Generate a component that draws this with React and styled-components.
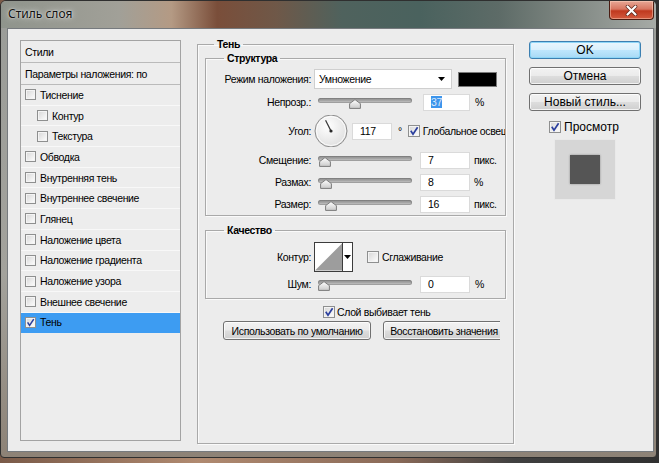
import styled, { createGlobalStyle } from "styled-components";

const GlobalStyle = createGlobalStyle`
  html, body {
    margin: 0;
    padding: 0;
  }
  body {
    width: 659px;
    height: 463px;
    overflow: hidden;
    background: linear-gradient(90deg, #7a5a48 0%, #b08a70 30%, #8a6a58 60%, #404040 78%, #303030 100%);
    font-family: "Liberation Sans", Arial, sans-serif;
    font-size: 10.5px;
    letter-spacing: -0.35px;
    color: #000;
  }
`;

const Window = styled.div`
  width: 657px;
  height: 458px;
  box-sizing: border-box;
  border: 1px solid #2f2f2f;
  border-radius: 6px 6px 4px 4px;
  background: linear-gradient(180deg, #9a9c98 0%, #a3a29c 60%, #8d8276 100%);
  display: flex;
  flex-direction: column;
  overflow: hidden;
`;

const TitleBar = styled.div`
  height: 27px;
  flex: none;
  display: flex;
  justify-content: space-between;
  align-items: flex-start;
  background: linear-gradient(
    90deg,
    #8f948c 0%,
    #a1a098 18%,
    #b49a84 26%,
    #7a4e3a 33%,
    #6f5848 42%,
    #4f625d 52%,
    #4a625e 64%,
    #5d6b67 76%,
    #7d8580 86%,
    #a6aaa6 100%
  );
`;

const Title = styled.div`
  margin: 5px 0 0 7px;
  font-family: "Noto Sans", "Open Sans", sans-serif;
  font-size: 12px;
  letter-spacing: 0;
  line-height: 16px;
  color: #111;
  text-shadow: 0 0 6px rgba(255, 255, 255, 0.85), 0 0 2px rgba(255, 255, 255, 0.8);
`;

const CloseButton = styled.div`
  width: 45px;
  height: 19px;
  margin-right: 2px;
  box-sizing: border-box;
  border: 1px solid #4a1c12;
  border-top: none;
  border-radius: 0 0 4px 4px;
  background: linear-gradient(180deg, #e7a795 0%, #d77661 45%, #c0391f 55%, #d35a3e 100%);
  box-shadow: inset 0 0 0 1px rgba(255, 220, 200, 0.45);
  display: flex;
  align-items: center;
  justify-content: center;
`;

const Client = styled.div`
  flex: none;
  height: 424px;
  margin: 0 2px 5px 6px;
  box-sizing: border-box;
  border: 1px solid #767a7e;
  background: #ececec;
  display: flex;
  align-items: flex-start;
  padding: 9px 0 0 12px;
`;

/* ---------- left list ---------- */

const StyleList = styled.div`
  width: 161px;
  height: 401px;
  margin-top: 2px;
  box-sizing: border-box;
  border: 1px solid #a3a3a3;
  background: #ededed;
  display: flex;
  flex-direction: column;
`;

const ListHeader = styled.div`
  height: 22px;
  box-sizing: border-box;
  border-bottom: 1px solid #bababa;
  padding-left: 4px;
  display: flex;
  align-items: center;
  white-space: nowrap;
  overflow: hidden;
`;

const Clipped = styled.span`
  display: inline-block;
  max-width: ${(p) => p.$max}px;
  overflow: hidden;
  white-space: nowrap;
`;

const ListItem = styled.div`
  height: 20.7px;
  box-sizing: border-box;
  border-bottom: 1px solid ${(p) => (p.$selected ? "#3d9cf2" : "#f8f8f8")};
  background: ${(p) => (p.$selected ? "#3d9cf2" : "transparent")};
  padding-left: ${(p) => (p.$indent ? 16 : 4)}px;
  display: flex;
  align-items: center;
  gap: 4px;
  white-space: nowrap;
`;

/* ---------- check box ---------- */

const Box = styled.span`
  flex: none;
  display: inline-flex;
  align-items: center;
  justify-content: center;
  width: ${(p) => p.$size}px;
  height: ${(p) => p.$size}px;
  box-sizing: border-box;
  border: 1px solid #8e8f8f;
  background: linear-gradient(135deg, #d6d6d6 0%, #f2f2f2 70%, #ffffff 100%);
  box-shadow: inset 0 0 0 1px #f4f4f4;
`;

function CheckBox({ checked, size = 11 }) {
  return (
    <Box $size={size}>
      {checked && (
        <svg width={size - 2} height={size - 2} viewBox="0 0 10 10">
          <path d="M1.8 4.8 L4 8.2 L8.6 1.2" fill="none" stroke="#2b3f9e" strokeWidth="1.7" />
        </svg>
      )}
    </Box>
  );
}

/* ---------- middle groups ---------- */

const Middle = styled.div`
  width: 317px;
  margin-left: 16px;
  flex: none;
`;

const Group = styled.fieldset`
  margin: ${(p) => p.$top || 0}px 0 0 0;
  min-width: 0;
  box-sizing: border-box;
  height: ${(p) => (p.$height ? `${p.$height}px` : "auto")};
  border: 1px solid #a9a9a9;
  box-shadow: 1px 1px 0 #fafafa, inset 1px 1px 0 #fafafa;
  padding: ${(p) => p.$pad};
  display: flex;
  flex-direction: column;
  gap: ${(p) => p.$gap || 0}px;
`;

const Legend = styled.legend`
  margin-left: ${(p) => p.$offset}px;
  padding: 0 3px;
  font-weight: bold;
  line-height: 13px;
`;

const Row = styled.div`
  height: ${(p) => p.$h}px;
  margin-top: ${(p) => p.$mt || 0}px;
  display: flex;
  align-items: center;
  white-space: nowrap;
  overflow: hidden;
`;

const Label = styled.span`
  flex: none;
  width: 105px;
  text-align: right;
`;

const Select = styled.div`
  width: 138px;
  height: 20px;
  margin-left: 3px;
  box-sizing: border-box;
  border: 1px solid #cfcfcf;
  background: #fff;
  display: flex;
  align-items: center;
  justify-content: space-between;
  padding: 0 6px 0 4px;
`;

const Swatch = styled.div`
  width: 39px;
  height: 15px;
  margin-left: 6px;
  box-sizing: border-box;
  border: 1px solid #7a7a7a;
  background: #000;
`;

const Field = styled.div`
  flex: none;
  width: ${(p) => p.$w}px;
  height: 17px;
  margin-left: ${(p) => p.$ml}px;
  box-sizing: border-box;
  border: 1px solid #dadada;
  background: #fff;
  padding-left: 7px;
  display: flex;
  align-items: center;
`;

const Selected = styled.span`
  background: #3d95ec;
  color: #dce9fb;
`;

const Unit = styled.span`
  margin-left: ${(p) => p.$ml || 5}px;
`;

const SliderTrack = styled.div`
  position: relative;
  flex: none;
  width: 94px;
  height: 18px;
  margin-left: 7px;
`;

const SliderRail = styled.div`
  position: absolute;
  left: 0;
  right: 0;
  top: 5px;
  height: 5px;
  border-radius: 3px;
  background: linear-gradient(180deg, #8a8a8a 0%, #a5a5a5 50%, #cfcfcf 100%);
  box-shadow: inset 0 0 0 1px rgba(110, 110, 110, 0.45);
`;

const SliderThumb = styled.svg`
  position: absolute;
  top: 6px;
`;

function Slider({ value }) {
  return (
    <SliderTrack>
      <SliderRail />
      <SliderThumb width="12" height="10" viewBox="0 0 12 10" style={{ left: value * 83 }}>
        <defs>
          <linearGradient id="thumbFill" x1="0" y1="0" x2="0" y2="1">
            <stop offset="0" stopColor="#ffffff" />
            <stop offset="1" stopColor="#c9c9c9" />
          </linearGradient>
        </defs>
        <polygon points="6,0.6 11.4,4.6 11.4,9.4 0.6,9.4 0.6,4.6" fill="url(#thumbFill)" stroke="#7b7b7b" />
      </SliderThumb>
    </SliderTrack>
  );
}

const DialWrap = styled.svg`
  flex: none;
  margin-left: 3px;
`;

function Dial({ angle }) {
  const r = (angle * Math.PI) / 180;
  const x = 17 + 12 * Math.cos(r);
  const y = 17 - 12 * Math.sin(r);
  return (
    <DialWrap width="34" height="34" viewBox="0 0 34 34">
      <defs>
        <radialGradient id="dialFill" cx="0.4" cy="0.35" r="0.7">
          <stop offset="0" stopColor="#ffffff" />
          <stop offset="1" stopColor="#dedede" />
        </radialGradient>
      </defs>
      <circle cx="17" cy="17" r="16" fill="url(#dialFill)" stroke="#8c8c8c" />
      <circle cx="17" cy="17" r="14.5" fill="none" stroke="#ffffff" strokeOpacity="0.8" />
      <line x1="17" y1="17" x2={x} y2={y} stroke="#3a3a3a" strokeWidth="1.3" />
      <circle cx="17" cy="17" r="1.6" fill="#2a2a2a" />
    </DialWrap>
  );
}

const ContourBox = styled.div`
  flex: none;
  width: 39px;
  height: 30px;
  margin-left: 3px;
  box-sizing: border-box;
  border: 1px solid #3c3c3c;
  background: #fff;
  display: flex;
`;

const ContourArrow = styled.div`
  flex: none;
  width: 9px;
  border-left: 1px solid #3c3c3c;
  display: flex;
  align-items: center;
  justify-content: center;
`;

const CheckLabel = styled.span`
  display: flex;
  align-items: center;
  gap: ${(p) => p.$gap || 3}px;
  margin-left: ${(p) => p.$ml || 0}px;
  white-space: nowrap;
`;

const Caret = () => (
  <svg width="7" height="4" viewBox="0 0 7 4">
    <polygon points="0,0 7,0 3.5,4" fill="#000" />
  </svg>
);

const ButtonRow = styled.div`
  width: 295px;
  margin-top: 2px;
  display: flex;
  gap: 12px;
  padding-left: 18px;
  box-sizing: border-box;
  overflow: hidden;
`;

const Button = styled.div`
  flex: none;
  width: ${(p) => p.$w}px;
  height: ${(p) => p.$h || 19}px;
  box-sizing: border-box;
  border: 1px solid ${(p) => (p.$primary ? "#3c7fb1" : "#707070")};
  border-radius: 3px;
  background: ${(p) =>
    p.$primary
      ? "linear-gradient(180deg, #eaf6fd 0%, #d9f0fc 48%, #bee6fd 52%, #a7d9f5 100%)"
      : "linear-gradient(180deg, #f2f2f2 0%, #ebebeb 48%, #dddddd 52%, #cfcfcf 100%)"};
  box-shadow: inset 0 0 0 1px ${(p) => (p.$primary ? "#8ed6f7" : "rgba(255, 255, 255, 0.75)")};
  display: flex;
  align-items: center;
  justify-content: center;
  font-size: ${(p) => p.$fs || 10.5}px;
  letter-spacing: ${(p) => (p.$fs ? 0 : -0.35)}px;
  white-space: nowrap;
  overflow: hidden;
`;

/* ---------- right column ---------- */

const Side = styled.div`
  width: 112px;
  margin: 3px 0 0 15px;
  flex: none;
  display: flex;
  flex-direction: column;
  gap: 8px;
  font-size: 12px;
  letter-spacing: 0;
`;

const PreviewRow = styled.div`
  margin: 1px 0 0 20px;
  display: flex;
  align-items: center;
  gap: 3px;
`;

const Preview = styled.div`
  width: 62px;
  height: 61px;
  margin: -3px 0 0 25px;
  box-sizing: border-box;
  border: 1px solid #e9e9e9;
  background: #d6d6d6;
  display: flex;
  align-items: center;
  justify-content: center;
`;

const PreviewSquare = styled.div`
  width: 30px;
  height: 29px;
  background: #555;
  box-shadow: 0 0 2px rgba(0, 0, 0, 0.35);
`;

const styleItems = [
  { name: "Тиснение" },
  { name: "Контур", indent: true },
  { name: "Текстура", indent: true },
  { name: "Обводка" },
  { name: "Внутренняя тень" },
  { name: "Внутреннее свечение" },
  { name: "Глянец" },
  { name: "Наложение цвета" },
  { name: "Наложение градиента" },
  { name: "Наложение узора" },
  { name: "Внешнее свечение" },
  { name: "Тень", checked: true, selected: true },
];

const sliderRows = [
  { label: "Смещение:", value: 0.01, text: "7", unit: "пикс." },
  { label: "Размах:", value: 0.03, text: "8", unit: "%" },
  { label: "Размер:", value: 0.08, text: "16", unit: "пикс." },
];

export default function App() {
  return (
    <>
      <GlobalStyle />
      <Window>
        <TitleBar>
          <Title>Стиль слоя</Title>
          <CloseButton>
            <svg width="13" height="11" viewBox="0 0 13 11">
              <path d="M2.5 1.5 L10.5 9.5 M10.5 1.5 L2.5 9.5" stroke="#5a2418" strokeWidth="3.6" strokeLinecap="round" />
              <path d="M2.5 1.5 L10.5 9.5 M10.5 1.5 L2.5 9.5" stroke="#ffffff" strokeWidth="2.2" strokeLinecap="round" />
            </svg>
          </CloseButton>
        </TitleBar>

        <Client>
          <StyleList>
            <ListHeader>Стили</ListHeader>
            <ListHeader>
              <Clipped $max={124}>Параметры наложения: по умолчанию</Clipped>
            </ListHeader>
            {styleItems.map((item) => (
              <ListItem key={item.name} $indent={item.indent} $selected={item.selected}>
                <CheckBox checked={item.checked} />
                {item.name}
              </ListItem>
            ))}
          </StyleList>

          <Middle>
            <Group $height={406} $pad="1px 7px 0 7px">
              <Legend $offset={9}>Тень</Legend>

              <Group $pad="4px 0 2px 0" $gap={4}>
                <Legend $offset={18}>Структура</Legend>
                <Row $h={20}>
                  <Label>Режим наложения:</Label>
                  <Select>
                    Умножение
                    <Caret />
                  </Select>
                  <Swatch />
                </Row>
                <Row $h={18}>
                  <Label>Непрозр.:</Label>
                  <Slider value={0.37} />
                  <Field $w={47} $ml={11}>
                    <Selected>37</Selected>
                  </Field>
                  <Unit>%</Unit>
                </Row>
                <Row $h={32}>
                  <Label>Угол:</Label>
                  <Dial angle={117} />
                  <Field $w={40} $ml={4}>117</Field>
                  <Unit $ml={6}>°</Unit>
                  <CheckLabel $ml={6}>
                    <CheckBox checked size={12} />
                    Глобальное освещение
                  </CheckLabel>
                </Row>
                {sliderRows.map((row) => (
                  <Row $h={18} key={row.label}>
                    <Label>{row.label}</Label>
                    <Slider value={row.value} />
                    <Field $w={50} $ml={8}>{row.text}</Field>
                    <Unit $ml={4}>{row.unit}</Unit>
                  </Row>
                ))}
              </Group>

              <Group $top={8} $pad="5px 0 5px 0" $gap={3}>
                <Legend $offset={18}>Качество</Legend>
                <Row $h={30}>
                  <Label>Контур:</Label>
                  <ContourBox>
                    <svg width="28" height="28" viewBox="0 0 28 28">
                      <polygon points="0,28 28,0 28,28" fill="#9d9d9d" />
                    </svg>
                    <ContourArrow>
                      <Caret />
                    </ContourArrow>
                  </ContourBox>
                  <CheckLabel $ml={14}>
                    <CheckBox size={12} />
                    Сглаживание
                  </CheckLabel>
                </Row>
                <Row $h={18}>
                  <Label>Шум:</Label>
                  <Slider value={0} />
                  <Field $w={50} $ml={8}>0</Field>
                  <Unit>%</Unit>
                </Row>
              </Group>

              <Row $h={14} $mt={6}>
                <CheckLabel $ml={118} $gap={2}>
                  <CheckBox checked size={12} />
                  Слой выбивает тень
                </CheckLabel>
              </Row>
              <ButtonRow>
                <Button $w={148}>Использовать по умолчанию</Button>
                <Button $w={122}>Восстановить значения</Button>
              </ButtonRow>
            </Group>
          </Middle>

          <Side>
            <Button $primary $w={112} $h={18} $fs={12}>OK</Button>
            <Button $w={112} $h={18} $fs={12}>Отмена</Button>
            <Button $w={112} $h={18} $fs={12}>Новый стиль...</Button>
            <PreviewRow>
              <CheckBox checked size={12} />
              Просмотр
            </PreviewRow>
            <Preview>
              <PreviewSquare />
            </Preview>
          </Side>
        </Client>
      </Window>
    </>
  );
}
